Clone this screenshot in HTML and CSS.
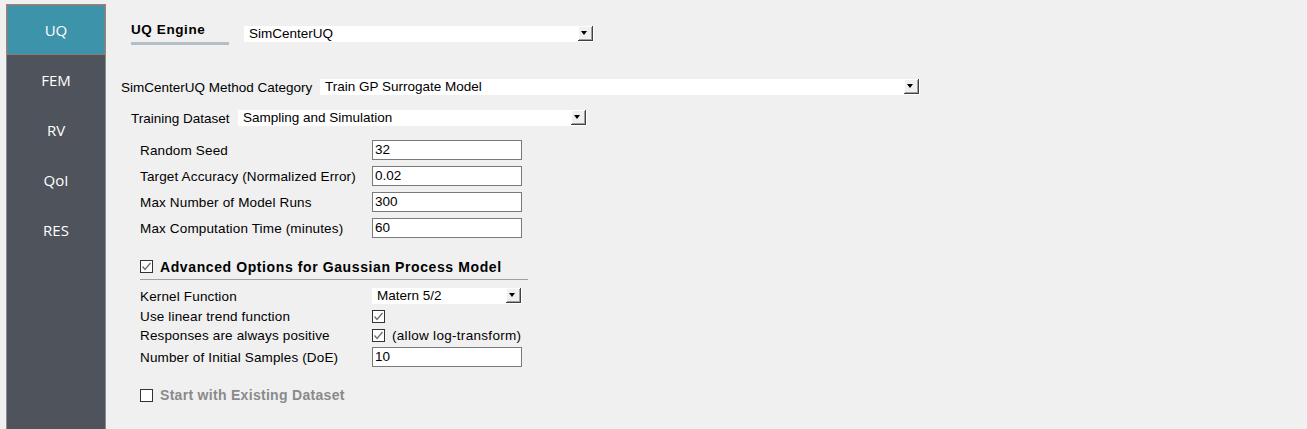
FILE: index.html
```html
<!DOCTYPE html>
<html>
<head>
<meta charset="utf-8">
<link rel="stylesheet" href="styles.css">
</head>
<body>
<div class="app">
  <nav class="sidebar">
    <div class="nav-item active">UQ</div>
    <div class="nav-item">FEM</div>
    <div class="nav-item">RV</div>
    <div class="nav-item">QoI</div>
    <div class="nav-item">RES</div>
  </nav>
  <main class="main">
    <div class="engine-row">
      <div class="tab">UQ Engine</div>
      <div class="combo combo-engine"><span class="combo-text">SimCenterUQ</span><span class="arrow"></span></div>
    </div>
    <div class="row method-row">
      <span class="label">SimCenterUQ Method Category</span>
      <div class="combo combo-method"><span class="combo-text">Train GP Surrogate Model</span><span class="arrow"></span></div>
    </div>
    <div class="row dataset-row">
      <span class="label">Training Dataset</span>
      <div class="combo combo-dataset"><span class="combo-text">Sampling and Simulation</span><span class="arrow"></span></div>
    </div>
    <div class="form">
      <div class="frow"><span class="flabel">Random Seed</span><div class="input">32</div></div>
      <div class="frow"><span class="flabel">Target Accuracy (Normalized Error)</span><div class="input">0.02</div></div>
      <div class="frow"><span class="flabel">Max Number of Model Runs</span><div class="input">300</div></div>
      <div class="frow"><span class="flabel">Max Computation Time (minutes)</span><div class="input">60</div></div>
    </div>
    <div class="adv-row">
      <span class="check"><svg width="11" height="11" viewBox="0 0 11 11"><polyline points="1.5,5.5 4,8.5 9.5,2" fill="none" stroke="#6d6d6d" stroke-width="1.3"/></svg></span>
      <span class="adv-title">Advanced Options for Gaussian Process Model</span>
    </div>
    <div class="sep"></div>
    <div class="adv">
      <div class="arow kernel"><span class="flabel">Kernel Function</span><div class="combo combo-kernel"><span class="combo-text">Matern 5/2</span><span class="arrow"></span></div></div>
      <div class="arow trend"><span class="flabel">Use linear trend function</span><span class="check"><svg width="11" height="11" viewBox="0 0 11 11"><polyline points="1.5,5.5 4,8.5 9.5,2" fill="none" stroke="#6d6d6d" stroke-width="1.3"/></svg></span></div>
      <div class="arow positive"><span class="flabel">Responses are always positive</span><span class="check"><svg width="11" height="11" viewBox="0 0 11 11"><polyline points="1.5,5.5 4,8.5 9.5,2" fill="none" stroke="#6d6d6d" stroke-width="1.3"/></svg></span><span class="check-note">(allow log-transform)</span></div>
      <div class="arow samples"><span class="flabel">Number of Initial Samples (DoE)</span><div class="input">10</div></div>
    </div>
    <div class="existing-row">
      <span class="check empty"></span>
      <span class="existing-title">Start with Existing Dataset</span>
    </div>
  </main>
</div>
</body>
</html>
```
FILE: styles.css
```css
html, body {
  margin: 0;
  padding: 0;
  background: #f0f0f0;
}
body {
  font-family: "Liberation Sans", Arial, sans-serif;
  font-size: 13.5px;
  color: #000;
  width: 1307px;
  height: 429px;
  overflow: hidden;
}
.app {
  display: flex;
  height: 429px;
}
.sidebar {
  width: 98px;
  margin: 4px 0 0 6px;
  background: #4f535b;
  border: 1px solid #878c93;
  border-bottom: none;
  display: flex;
  flex-direction: column;
  font-family: "Open Sans", "Noto Sans", sans-serif;
  font-size: 15px;
  color: #fff;
}
.nav-item {
  height: 50px;
  display: flex;
  align-items: center;
  justify-content: center;
  box-sizing: border-box;
}
.nav-item.active {
  background: #3d93a9;
  outline: 1px dotted #d8633a;
  outline-offset: -1px;
}
.main {
  margin-left: 15px;
  padding-top: 20px;
  display: flex;
  flex-direction: column;
}
.engine-row {
  display: flex;
  align-items: flex-start;
  margin-left: 10px;
  height: 25px;
}
.tab {
  width: 98px;
  height: 22px;
  line-height: 19px;
  border-bottom: 3px solid #b3bfc6;
  font-weight: bold;
  font-size: 13.5px;
  letter-spacing: 0.6px;
  white-space: nowrap;
}
.combo {
  height: 16px;
  background: #fff;
  display: flex;
  align-items: center;
  justify-content: space-between;
  box-sizing: border-box;
}
.combo-text {
  padding-left: 5px;
  line-height: 16px;
  white-space: nowrap;
}
.arrow {
  width: 15px;
  height: 15px;
  margin-right: 1px;
  align-self: flex-start;
  box-sizing: border-box;
  background: #f0f0f0;
  border-right: 1px solid #404040;
  border-bottom: 1px solid #404040;
  box-shadow: inset 1px 1px 0 #ffffff, inset -1px -1px 0 #a0a0a0;
  position: relative;
}
.arrow::after {
  content: "";
  position: absolute;
  left: 3px;
  top: 5px;
  border-top: 4px solid #000;
  border-left: 3.5px solid transparent;
  border-right: 3.5px solid transparent;
}
.combo-engine {
  width: 350px;
  margin-left: 15px;
  margin-top: 6px;
}
.row {
  display: flex;
  align-items: center;
  height: 16px;
}
.method-row {
  margin-top: 34px;
}
.method-row .label {
  width: 199px;
  white-space: nowrap;
}
.combo-method {
  width: 600px;
}
.dataset-row {
  margin-top: 15px;
  margin-left: 10px;
}
.dataset-row .label {
  width: 107px;
  white-space: nowrap;
}
.combo-dataset {
  width: 349px;
}
.form {
  margin-top: 14px;
  margin-left: 19px;
  display: flex;
  flex-direction: column;
  gap: 6px;
}
.frow {
  display: flex;
  align-items: center;
  height: 20px;
}
.flabel {
  width: 232px;
  white-space: nowrap;
  letter-spacing: 0.15px;
}
.input {
  width: 150px;
  height: 20px;
  box-sizing: border-box;
  background: #fff;
  border: 1px solid #7a7a7a;
  padding-left: 2px;
  line-height: 18px;
}
.adv-row {
  margin-top: 22px;
  margin-left: 19px;
  display: flex;
  align-items: center;
  height: 13px;
}
.check {
  width: 13px;
  height: 13px;
  box-sizing: border-box;
  border: 1px solid #333;
  background: #fff;
  display: inline-flex;
  align-items: center;
  justify-content: center;
  flex: none;
}
.adv-title {
  margin-left: 7px;
  font-weight: bold;
  font-size: 14px;
  letter-spacing: 0.6px;
  white-space: nowrap;
}
.sep {
  margin-top: 6px;
  margin-left: 19px;
  width: 388px;
  height: 1px;
  background: #a0a0a0;
}
.adv {
  margin-left: 19px;
  margin-top: 8px;
  display: flex;
  flex-direction: column;
}
.arow {
  display: flex;
  align-items: center;
}
.kernel { height: 16px; }
.combo-kernel { width: 150px; }
.trend { margin-top: 2px; height: 20px; }
.positive { height: 19px; }
.check-note { margin-left: 7px; white-space: nowrap; letter-spacing: 0.3px; }
.samples { margin-top: 2px; height: 20px; }
.existing-row {
  margin-top: 21px;
  margin-left: 19px;
  display: flex;
  align-items: center;
  height: 14px;
}
.existing-title {
  margin-left: 7px;
  font-weight: bold;
  font-size: 14px;
  color: #8a8a8a;
  letter-spacing: 0.3px;
  white-space: nowrap;
}
```
